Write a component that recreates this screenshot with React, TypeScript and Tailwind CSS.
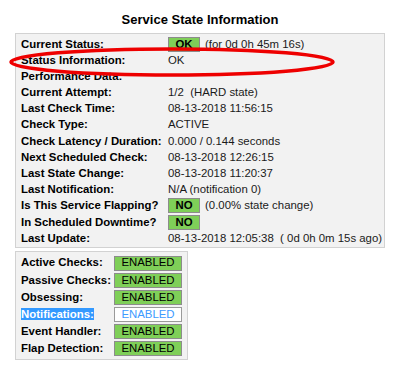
const stateRows: { label: string; value: string; badge?: string }[] = [
  { label: "Current Status:", value: "(for 0d 0h 45m 16s)", badge: "OK" },
  { label: "Status Information:", value: "OK" },
  { label: "Performance Data:", value: "" },
  { label: "Current Attempt:", value: "1/2\u00a0\u00a0(HARD state)" },
  { label: "Last Check Time:", value: "08-13-2018 11:56:15" },
  { label: "Check Type:", value: "ACTIVE" },
  { label: "Check Latency / Duration:", value: "0.000 / 0.144 seconds" },
  { label: "Next Scheduled Check:", value: "08-13-2018 12:26:15" },
  { label: "Last State Change:", value: "08-13-2018 11:20:37" },
  { label: "Last Notification:", value: "N/A (notification 0)" },
  { label: "Is This Service Flapping?", value: "(0.00% state change)", badge: "NO" },
  { label: "In Scheduled Downtime?", value: "", badge: "NO" },
  { label: "Last Update:", value: "08-13-2018 12:05:38\u00a0\u00a0( 0d 0h 0m 15s ago)" },
];

const checks = [
  { label: "Active Checks:" },
  { label: "Passive Checks:" },
  { label: "Obsessing:" },
  { label: "Notifications:", selected: true },
  { label: "Event Handler:" },
  { label: "Flap Detection:" },
];

export default function App() {
  return (
    <div
      className="relative w-[400px] h-[370px] bg-white text-[11.4px] text-[#1a1a1a]"
      style={{ fontFamily: '"Liberation Sans", Arial, sans-serif' }}
    >
      <div className="pt-[12px] h-[33px] text-center text-[13px] font-bold text-black leading-[16px]">
        Service State Information
      </div>

      <div className="ml-[15px] w-[370px] border border-[#d2d2d2] bg-[#f2f2f2] pl-[5px] pt-[2px] pb-[1px]">
        {stateRows.map((row) => (
          <div key={row.label} className="flex items-center h-[16.2px]">
            <div className="w-[147px] shrink-0 font-bold text-black whitespace-nowrap">{row.label}</div>
            <div className="flex items-center gap-[5px] whitespace-nowrap">
              {row.badge && (
                <span className="w-[32px] h-[15px] flex items-center justify-center bg-[#7fcf58] border border-[#8c8c8c] font-bold text-black">
                  {row.badge}
                </span>
              )}
              <span>{row.value}</span>
            </div>
          </div>
        ))}
      </div>

      <div className="ml-[15px] mt-[3px] w-[173px] border border-[#d2d2d2] bg-[#f2f2f2] pl-[5px] pt-[2px] pb-[1px]">
        {checks.map((c) => (
          <div key={c.label} className="flex items-center h-[17.2px]">
            <div className="w-[93px] shrink-0 font-bold whitespace-nowrap">
              <span className={c.selected ? "bg-[#3399ff] text-white" : "text-black"}>{c.label}</span>
            </div>
            <span
              className={
                c.selected
                  ? "w-[68px] h-[15px] flex items-center justify-center bg-white border border-[#9a9a9a] text-[#3d9bff]"
                  : "w-[68px] h-[15px] flex items-center justify-center bg-[#7fcf58] border border-[#8c8c8c] text-black"
              }
            >
              ENABLED
            </span>
          </div>
        ))}
      </div>

      {/* red annotation ring round the status information row */}
      <svg className="absolute left-0 top-0 pointer-events-none" width="400" height="370">
        <ellipse cx="172" cy="62" rx="161" ry="13" fill="none" stroke="#ee0000" strokeWidth="3.6" />
      </svg>
    </div>
  );
}
